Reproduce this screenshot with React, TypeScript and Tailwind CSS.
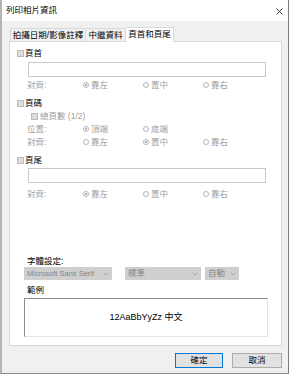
const alignOptions = ['靠左', '置中', '靠右'];

const CheckBox = () => (
  <div className="h-[7px] w-[7px] shrink-0 border border-[#bcbcbc] bg-[#dcdcdc]" />
);

const Radio = ({ on }: { on: boolean }) => (
  <div className="flex h-[6px] w-[6px] shrink-0 items-center justify-center rounded-full border border-[#b4b4b4] bg-white">
    {on && <div className="h-[2px] w-[2px] rounded-full bg-[#9a9a9a]" />}
  </div>
);

const OptionRow = ({
  label,
  options,
  selected,
  className,
}: {
  label: string;
  options: string[];
  selected: number;
  className?: string;
}) => (
  <div className={`flex h-[10px] items-center pl-[17px] text-[#a0a0a0] ${className ?? ''}`}>
    <span className="w-[56px]">{label}</span>
    {options.map((o, i) => (
      <div key={o} className="flex w-[60px] items-center gap-[2px]">
        <Radio on={i === selected} />
        <span>{o}</span>
      </div>
    ))}
  </div>
);

const SectionHead = ({ label, className }: { label: string; className?: string }) => (
  <div className={`flex h-[10px] items-center gap-[1px] pl-[7px] text-black ${className ?? ''}`}>
    <CheckBox />
    <span>{label}</span>
  </div>
);

const Dropdown = ({ text, className }: { text: string; className: string }) => (
  <div
    className={`flex h-[13px] items-center justify-between bg-[#cfcfcf] pl-[3px] pr-[3px] text-[#858585] ${className}`}
  >
    <span>{text}</span>
    <svg width="6" height="4" viewBox="0 0 6 4" className="shrink-0">
      <path d="M0.5 0.5 L3 3 L5.5 0.5" fill="none" stroke="#9c9c9c" strokeWidth="0.8" />
    </svg>
  </div>
);

export default function App() {
  return (
    <div className="flex h-[374px] w-[289px] flex-col border-b border-l-2 border-r border-b-[#8a8a8a] border-l-[#b4b4b4] border-r-[#7c7c7c] bg-[#f0f0f0] font-['Liberation_Sans','Noto_Sans_CJK_TC',sans-serif] text-[8.5px] leading-none text-black">
      {/* title bar */}
      <div className="flex h-[21px] items-center justify-between bg-white pl-[4px] pr-[5px]">
        <span>列印相片資訊</span>
        <svg width="7" height="7" viewBox="0 0 7 7" className="mt-[1px]">
          <path d="M0.5 0.5 L6.5 6.5 M6.5 0.5 L0.5 6.5" stroke="#3a3a3a" strokeWidth="1" />
        </svg>
      </div>

      {/* tabs */}
      <div className="ml-[8px] mt-[6px] flex items-end">
        <div className="flex h-[13px] w-[76px] items-center justify-center border border-b-0 border-[#d9d9d9] bg-[#f0f0f0]">
          拍攝日期/影像註釋
        </div>
        <div className="-ml-px flex h-[13px] w-[41px] items-center justify-center border border-b-0 border-[#d9d9d9] bg-[#f0f0f0]">
          中繼資料
        </div>
        <div className="relative z-10 -mb-px -ml-px flex h-[15px] w-[49px] items-center justify-center border border-b-0 border-[#d9d9d9] bg-white pb-[1px]">
          頁首和頁尾
        </div>
      </div>

      {/* panel */}
      <div className="ml-[7px] mr-[6px] flex h-[305px] flex-col border border-[#d9d9d9] bg-white pt-[6px]">
        <SectionHead label="頁首" />
        <div className="ml-[18px] mt-[4px] h-[15px] w-[238px] border border-[#c8c8c8] bg-white" />
        <OptionRow label="對齊:" options={alignOptions} selected={0} className="mt-[3px]" />

        <SectionHead label="頁碼" className="mt-[8px]" />
        <div className="mt-[3px] flex h-[10px] items-center gap-[2px] pl-[21px] text-[#a0a0a0]">
          <CheckBox />
          <span>總頁數 (1/2)</span>
        </div>
        <OptionRow label="位置:" options={['頂端', '底端']} selected={0} className="mt-[3px]" />
        <OptionRow label="對齊:" options={alignOptions} selected={1} className="mt-[3px]" />

        <SectionHead label="頁尾" className="mt-[8px]" />
        <div className="ml-[18px] mt-[3px] h-[15px] w-[238px] border border-[#c8c8c8] bg-white" />
        <OptionRow label="對齊:" options={alignOptions} selected={0} className="mt-[6px]" />

        <div className="flex-1" />

        <div className="flex h-[10px] items-center pl-[17px]">字體設定:</div>
        <div className="ml-[14px] mt-px flex items-center">
          <Dropdown text="Microsoft Sans Serif" className="w-[88px] text-[7.5px]" />
          <Dropdown text="標準" className="ml-[13px] w-[76px]" />
          <Dropdown text="自動" className="ml-[4px] w-[34px]" />
        </div>

        <div className="mt-[5px] flex h-[10px] items-center pl-[17px]">範例</div>
        <div className="mb-[8px] ml-[14px] mt-[3px] flex h-[39px] w-[244px] items-center justify-center border border-b-[#e3e3e3] border-l-[#8c8c8c] border-r-[#e3e3e3] border-t-[#8c8c8c] bg-white text-[9px]">
          12AaBbYyZz 中文
        </div>
      </div>

      {/* buttons */}
      <div className="mr-[6px] mt-[7px] flex justify-end gap-[9px]">
        <button className="flex h-[15px] w-[48px] items-center justify-center border border-[#0078d7] bg-[#e1e1e1] leading-none">
          確定
        </button>
        <button className="flex h-[15px] w-[50px] items-center justify-center border border-[#adadad] bg-[#e1e1e1] leading-none">
          取消
        </button>
      </div>
    </div>
  );
}
